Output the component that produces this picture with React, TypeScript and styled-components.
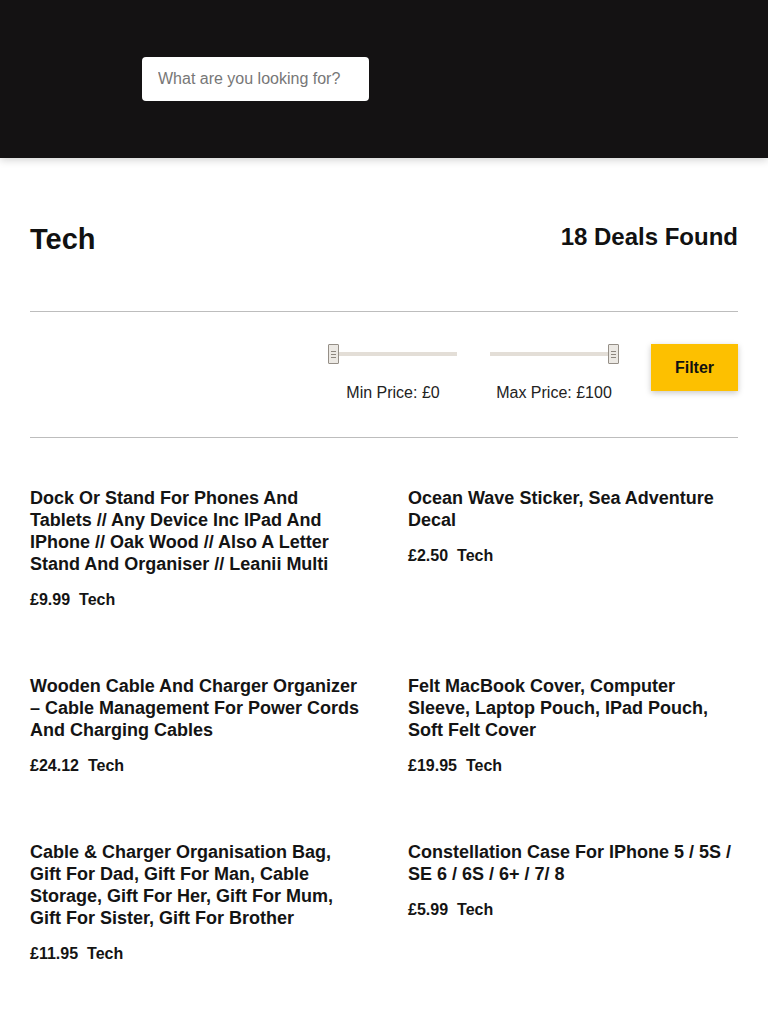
import React from "react";
import styled, { createGlobalStyle } from "styled-components";

const GlobalStyle = createGlobalStyle`
  html, body {
    margin: 0;
    padding: 0;
    background: #ffffff;
    font-family: "Liberation Sans", Arial, sans-serif;
    color: #111111;
  }
  * { box-sizing: border-box; }
`;

const Header = styled.header`
  height: 158px;
  background: #141213;
  padding: 57px 0 0 142px;
  box-shadow: 0 2px 8px rgba(0, 0, 0, 0.18);
  position: relative;
  z-index: 1;
`;

const SearchInput = styled.input`
  width: 227px;
  height: 44px;
  border: none;
  border-radius: 4px;
  background: #ffffff;
  padding: 0 16px;
  font-family: "Liberation Sans", Arial, sans-serif;
  font-size: 16px;
  color: #222;
  outline: none;
  &::placeholder {
    color: #777777;
  }
`;

const Main = styled.main`
  padding: 0 30px;
`;

const TitleRow = styled.div`
  display: flex;
  justify-content: space-between;
  align-items: flex-start;
  margin-top: 61px;
  height: 40px;
`;

const PageTitle = styled.h1`
  margin: 0;
  font-family: "Liberation Sans", Arial, sans-serif;
  font-weight: 700;
  font-size: 29px;
  line-height: 40px;
  color: #111;
`;

const Count = styled.h2`
  margin: 0;
  font-family: "Liberation Sans", Arial, sans-serif;
  font-weight: 700;
  font-size: 24px;
  line-height: 36px;
  color: #111;
`;

const Rule = styled.hr<{ $top: number }>`
  margin: ${(p) => p.$top}px 0 0;
  border: none;
  border-top: 1px solid #bdbdbd;
  height: 0;
`;

const FilterRow = styled.div`
  display: flex;
  justify-content: flex-end;
  align-items: flex-start;
  padding: 32px 0 35px;
`;

const SliderGroup = styled.div`
  display: flex;
  flex-direction: column;
  align-items: center;
  width: 130px;
  margin-right: 31px;
`;

const Slider = styled.div`
  position: relative;
  width: 130px;
  height: 20px;
`;

const Track = styled.div`
  position: absolute;
  left: 1px;
  right: 1px;
  top: 8px;
  height: 4px;
  background: #e3ded7;
`;

const Thumb = styled.div<{ $side: "left" | "right" }>`
  position: absolute;
  top: 0;
  ${(p) => (p.$side === "left" ? "left: 0;" : "right: 0;")}
  width: 11px;
  height: 20px;
  border: 1px solid #958f87;
  border-radius: 1px;
  background: #ece9e4;
  display: flex;
  flex-direction: column;
  align-items: center;
  justify-content: center;
  gap: 2px;
`;

const Grip = styled.span`
  display: block;
  width: 5px;
  height: 1px;
  background: #8d877f;
`;

const SliderLabel = styled.div`
  margin-top: 20px;
  font-size: 16px;
  line-height: 18px;
  color: #222;
  white-space: nowrap;
`;

const FilterButton = styled.button`
  margin-left: 1px;
  width: 87px;
  height: 47px;
  border: none;
  background: #fdc000;
  font-family: "Liberation Sans", Arial, sans-serif;
  font-weight: 700;
  font-size: 16px;
  color: #111;
  box-shadow: 0 2px 6px rgba(0, 0, 0, 0.22);
  cursor: pointer;
`;

const Grid = styled.div`
  display: grid;
  grid-template-columns: 330px 330px;
  column-gap: 48px;
  row-gap: 65px;
  padding-top: 49px;
`;

const Card = styled.article`
  display: flex;
  flex-direction: column;
`;

const CardTitle = styled.h3`
  margin: 0 0 15px;
  font-size: 18px;
  line-height: 22px;
  font-weight: 700;
  color: #141414;
`;

const Meta = styled.div`
  display: flex;
  gap: 9px;
  font-size: 16px;
  line-height: 20px;
  font-weight: 700;
  color: #141414;
`;

type Deal = { title: string; price: string; category: string };

const deals: Deal[] = [
  {
    title:
      "Dock Or Stand For Phones And Tablets // Any Device Inc IPad And IPhone // Oak Wood // Also A Letter Stand And Organiser // Leanii Multi",
    price: "£9.99",
    category: "Tech",
  },
  { title: "Ocean Wave Sticker, Sea Adventure Decal", price: "£2.50", category: "Tech" },
  {
    title:
      "Wooden Cable And Charger Organizer – Cable Management For Power Cords And Charging Cables",
    price: "£24.12",
    category: "Tech",
  },
  {
    title: "Felt MacBook Cover, Computer Sleeve, Laptop Pouch, IPad Pouch, Soft Felt Cover",
    price: "£19.95",
    category: "Tech",
  },
  {
    title:
      "Cable & Charger Organisation Bag, Gift For Dad, Gift For Man, Cable Storage, Gift For Her, Gift For Mum, Gift For Sister, Gift For Brother",
    price: "£11.95",
    category: "Tech",
  },
  {
    title: "Constellation Case For IPhone 5 / 5S / SE 6 / 6S / 6+ / 7/ 8",
    price: "£5.99",
    category: "Tech",
  },
];

const PriceSlider = ({ side, label }: { side: "left" | "right"; label: string }) => (
  <SliderGroup>
    <Slider>
      <Track />
      <Thumb $side={side}>
        <Grip />
        <Grip />
        <Grip />
      </Thumb>
    </Slider>
    <SliderLabel>{label}</SliderLabel>
  </SliderGroup>
);

export default function App() {
  return (
    <>
      <GlobalStyle />
      <Header>
        <SearchInput placeholder="What are you looking for?" />
      </Header>
      <Main>
        <TitleRow>
          <PageTitle>Tech</PageTitle>
          <Count>18 Deals Found</Count>
        </TitleRow>
        <Rule $top={52} />
        <FilterRow>
          <PriceSlider side="left" label="Min Price: £0" />
          <PriceSlider side="right" label="Max Price: £100" />
          <FilterButton>Filter</FilterButton>
        </FilterRow>
        <Rule $top={0} />
        <Grid>
          {deals.map((d) => (
            <Card key={d.title}>
              <CardTitle>{d.title}</CardTitle>
              <Meta>
                <span>{d.price}</span>
                <span>{d.category}</span>
              </Meta>
            </Card>
          ))}
        </Grid>
      </Main>
    </>
  );
}
